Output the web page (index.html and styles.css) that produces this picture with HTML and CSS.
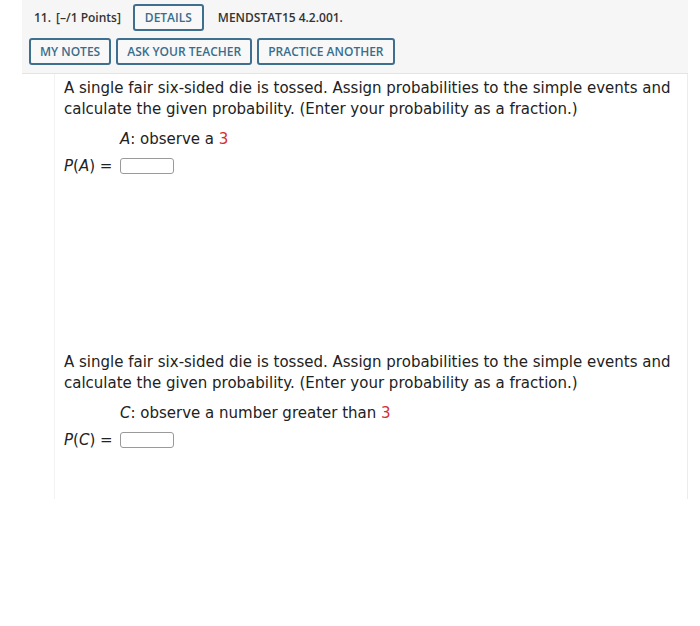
FILE: index.html
```html
<!DOCTYPE html>
<html lang="en">
<head>
  <meta charset="UTF-8" />
  <title>Question 11 | MENDSTAT15 4.2.001</title>
  <meta name="viewport" content="width=device-width, initial-scale=1.0" />
  <link rel="stylesheet" href="styles.css">
</head>
<body>
  <div class="question">
    <header class="q-head">
      <div class="q-row">
        <span class="q-num">11.</span>
        <span class="q-points">[&ndash;/1 Points]</span>
        <button class="btn btn-details">DETAILS</button>
        <span class="q-code">MENDSTAT15 4.2.001.</span>
      </div>
      <div class="q-row q-actions">
        <button class="btn">MY NOTES</button>
        <button class="btn">ASK YOUR TEACHER</button>
        <button class="btn">PRACTICE ANOTHER</button>
      </div>
    </header>

    <section class="q-body">
      <div class="part">
        <p class="prompt">A single fair six-sided die is tossed. Assign probabilities to the simple events and calculate the given probability. (Enter your probability as a fraction.)</p>
        <p class="event"><i>A</i>: observe a <span class="red">3</span></p>
        <p class="answer"><span class="lbl"><i>P</i>(<i>A</i>) =</span> <input class="box" type="text"></p>
      </div>

      <div class="part part-c">
        <p class="prompt">A single fair six-sided die is tossed. Assign probabilities to the simple events and calculate the given probability. (Enter your probability as a fraction.)</p>
        <p class="event"><i>C</i>: observe a number greater than <span class="red">3</span></p>
        <p class="answer"><span class="lbl"><i>P</i>(<i>C</i>) =</span> <input class="box" type="text"></p>
      </div>
    </section>
  </div>
</body>
</html>
```

FILE: styles.css
```css
body {
  margin: 0;
  background: #fff;
  color: #222;
  font-family: "DejaVu Sans", Verdana, sans-serif;
}

.question {
  margin-left: 22px;
  width: 666px;
}

.q-head {
  background: #f6f6f6;
  border-bottom: 1px solid #e4e4e4;
  padding: 4px 0 8px 7px;
  font-family: "Open Sans", sans-serif;
  font-size: 12px;
  font-weight: 600;
}

.q-row {
  display: flex;
  align-items: center;
  gap: 7px;
}

.q-actions {
  gap: 5px;
  margin-top: 7px;
}

.q-num {
  margin-left: 5px;
  color: #333;
}

.q-points {
  margin-left: -2px;
  margin-right: 5px;
  color: #333;
}

.q-code {
  margin-left: 7px;
  color: #333;
}

.btn {
  font-family: "Open Sans", sans-serif;
  font-size: 12px;
  font-weight: 600;
  color: #3a6d8c;
  background: #f8f8f8;
  border: 2px solid #3f6f8e;
  border-radius: 3px;
  height: 27px;
  padding: 0 9px;
}

.btn-details {
  padding: 0 10px;
}

.q-body {
  border-left: 1px solid #f2f2f2;
  border-right: 1px solid #ececec;
  margin-left: 32px;
  padding: 4px 0 50px 9px;
  font-size: 15px;
}

.part p {
  margin: 0;
}

.prompt {
  line-height: 21px;
}

.event {
  margin-top: 10px !important;
  padding-left: 56px;
}

.answer {
  display: flex;
  align-items: center;
  margin-top: 9px !important;
}

.lbl {
  width: 56px;
}

.box {
  width: 50px;
  height: 12px;
  border: 1px solid #9a9a9a;
  border-radius: 3px;
  padding: 1px;
}

.red {
  color: #d3302f;
}

.part-c {
  margin-top: 177px;
}
```
